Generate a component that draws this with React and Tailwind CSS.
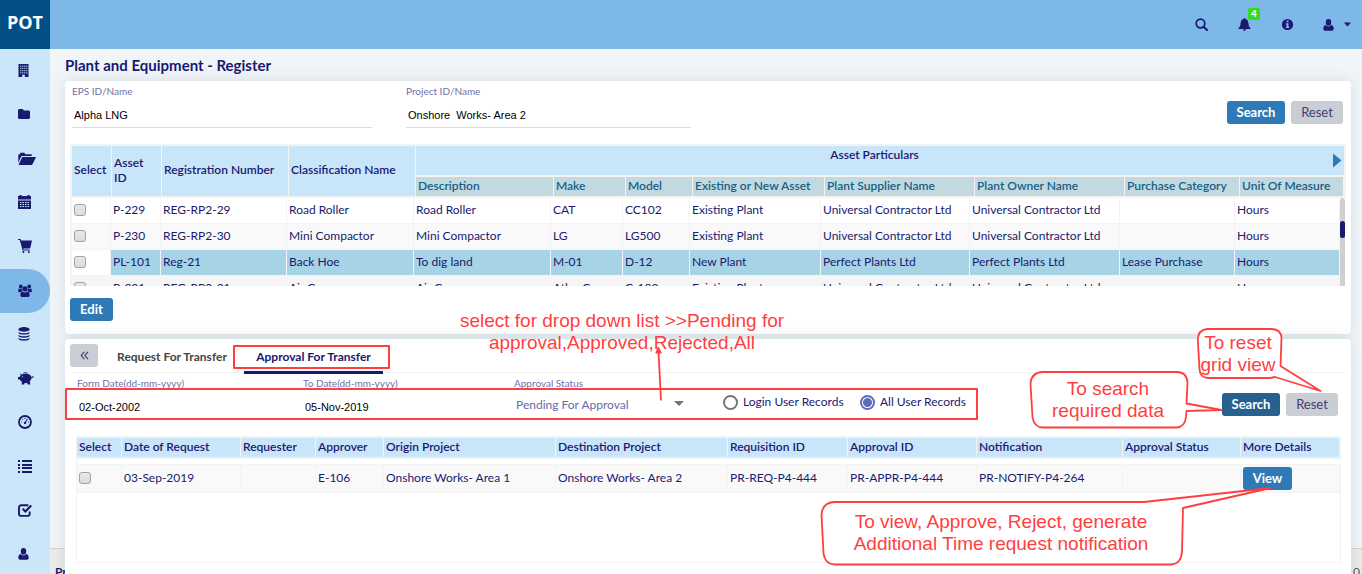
import { useState } from "react";

const assetColumns = [
  "Description",
  "Make",
  "Model",
  "Existing or New Asset",
  "Plant Supplier Name",
  "Plant Owner Name",
  "Purchase Category",
  "Unit Of Measure",
];

const assetRows = [
  ["P-229", "REG-RP2-29", "Road Roller", "Road Roller", "CAT", "CC102", "Existing Plant", "Universal Contractor Ltd", "Universal Contractor Ltd", "", "Hours"],
  ["P-230", "REG-RP2-30", "Mini Compactor", "Mini Compactor", "LG", "LG500", "Existing Plant", "Universal Contractor Ltd", "Universal Contractor Ltd", "", "Hours"],
  ["PL-101", "Reg-21", "Back Hoe", "To dig land", "M-01", "D-12", "New Plant", "Perfect Plants Ltd", "Perfect Plants Ltd", "Lease Purchase", "Hours"],
  ["P-231", "REG-RP2-31", "Air Compressor", "Air Compressor", "Atlas Copco", "C-100", "Existing Plant", "Universal Contractor Ltd", "Universal Contractor Ltd", "", "Hours"],
];

const rowTones = ["bg-white", "bg-[#f9f9f9]", "bg-[#a6d3e6]", "bg-[#f5f5f5]"];

const headWidths = [40, 50, 127, 127, 138, 72, 67, 132, 150, 150, 115, 104];
const bodyWidths = [39, 50, 126, 127, 137, 72, 67, 131, 149, 150, 115, 105];
const transferWidths = [45, 119, 75, 68, 172, 172, 120, 129, 146, 118, 99];

const transferColumns = [
  "Select",
  "Date of Request",
  "Requester",
  "Approver",
  "Origin Project",
  "Destination Project",
  "Requisition ID",
  "Approval ID",
  "Notification",
  "Approval Status",
  "More Details",
];

const transferCells = ["03-Sep-2019", "", "E-106", "Onshore Works- Area 1", "Onshore Works- Area 2", "PR-REQ-P4-444", "PR-APPR-P4-444", "PR-NOTIFY-P4-264", ""];

function Columns({ widths }) {
  return (
    <colgroup>
      {widths.map((w, i) => (
        <col key={i} style={{ width: w }} />
      ))}
    </colgroup>
  );
}

function Icon({ w, h, children }) {
  return (
    <svg width={w} height={h} viewBox={`0 0 ${w} ${h}`} fill="currentColor" aria-hidden="true">
      {children}
    </svg>
  );
}

const UserShape = () => (
  <Icon w={11} h={12}>
    <ellipse cx="5.5" cy="3.4" rx="2.7" ry="3.3" />
    <path d="M2.6 6.1C.9 6.7.3 8 .3 9.8c0 1.3.7 2 1.9 2h6.6c1.2 0 1.9-.7 1.9-2 0-1.800-.6-3.100-2.300-3.700-.8.900-1.700 1.300-2.900 1.300S3.400 7 2.600 6.100z" />
  </Icon>
);

const menu = [
  {
    name: "Enterprise",
    icon: (
      <Icon w={11} h={13}>
        <path fillRule="evenodd" d="M.5 0h10v13H6.800v-2.300H4.200V13H.5zM2.300 1.600v1.200h1V1.600zm2 0v1.200h1V1.600zm2 0v1.200h1V1.600zm2 0v1.200h1V1.600zM2.300 3.800V5h1V3.800zm2 0V5h1V3.800zm2 0V5h1V3.800zm2 0V5h1V3.800zM2.300 6v1.200h1V6zm2 0v1.200h1V6zm2 0v1.200h1V6zm2 0v1.200h1V6zM2.300 8.200v1.200h1V8.200zm2 0v1.200h1V8.200zm2 0v1.200h1V8.200zm2 0v1.200h1V8.200z" />
      </Icon>
    ),
  },
  {
    name: "Projects",
    icon: (
      <Icon w={12} h={10}>
        <path d="M0 1.500C0 .6.6 0 1.500 0h2.700c.9 0 1.400.6 1.400 1.500h4.900c.9 0 1.500.6 1.500 1.500v5.500c0 .9-.6 1.500-1.500 1.500h-9C.6 10 0 9.400 0 8.500z" />
      </Icon>
    ),
  },
  {
    name: "Library",
    icon: (
      <Icon w={18} h={13}>
        <path d="M.3 10.800V2.600h1.200L2.400.8h4l.9 1.400h6.400v1.900H4.200c-.6 0-1 .3-1.300.8z" />
        <path d="M4.700 5h12.600c.5 0 .6.4.4.8l-3.200 6.400c-.2.500-.6.8-1.100.8H1.200c-.5 0-.6-.4-.4-.8L4 5.500c.1-.3.4-.5.700-.5z" />
      </Icon>
    ),
  },
  {
    name: "Calendar",
    icon: (
      <Icon w={13} h={14}>
        <path d="M1.500 0h2v1h6V0h2v1H13v3.500H0V1h1.500z" />
        <path fillRule="evenodd" d="M0 5.500h13V14H0zm2 1.500v1h1.500V7zm2.500 0v1H6V7zM7 7v1h1.500V7zm2.500 0v1H11V7zM2 9v1h1.500V9zm2.500 0v1H6V9zM7 9v1h1.500V9zm2.500 0v1H11V9zM2 11v1h1.500v-1zm2.500 0v1H6v-1zM7 11v1h1.500v-1zm2.500 0v1H11v-1z" />
      </Icon>
    ),
  },
  {
    name: "Procurement",
    icon: (
      <Icon w={14} h={14}>
        <path d="M0 0h2.500l.7 1.600H14l-1.600 7c-.1.500-.5.800-1 .8H5.300l.3 1.100h6.200v1H4.600L1.800 1.100H0z" />
        <circle cx="5.400" cy="13" r="1" />
        <circle cx="10.800" cy="13" r="1" />
      </Icon>
    ),
  },
  {
    name: "Resources",
    active: true,
    icon: (
      <Icon w={14} h={14}>
        <circle cx="2.800" cy="2.400" r="1.900" />
        <circle cx="11.200" cy="2.400" r="1.900" />
        <circle cx="7" cy="4.800" r="2.600" />
        <path d="M.2 7.400C.1 5.400.6 4.600 1.300 4.400c.9.600 1.900.6 2.600.2-.1 1 .1 1.900.7 2.700-.9.100-1.500.4-1.900.9H1.400C.7 8.200.2 8 .2 7.400zM13.800 7.400c.1-2-.4-2.800-1.100-3-.9.600-1.900.6-2.600.2.1 1-.1 1.900-.7 2.700.9.100 1.500.4 1.900.9h1.300c.7 0 1.200-.2 1.200-.8z" />
        <path d="M4.400 7.400c-1.300.3-2 1.600-2 3.500 0 1.400.7 2.100 1.900 2.100h5.400c1.200 0 1.900-.7 1.900-2.100 0-1.900-.7-3.200-2-3.500-.7.700-1.500 1-2.600 1s-1.900-.3-2.600-1z" />
      </Icon>
    ),
  },
  {
    name: "Data",
    icon: (
      <Icon w={12} h={14}>
        <ellipse cx="6" cy="2.400" rx="5.600" ry="2.400" />
        <path d="M.4 5C1.600 6 3.600 6.300 6 6.300S10.400 6 11.600 5v.8C11.400 7 9 7.800 6 7.800S.6 7 .4 5.800zM.4 8c1.200 1 3.200 1.300 5.600 1.300S10.400 9 11.600 8v.8c-.2 1.200-2.600 2-5.600 2S.6 10 .4 8.800zM.4 11c1.200 1 3.200 1.300 5.600 1.300s4.400-.3 5.600-1.300v.8c-.2 1.200-2.600 2-5.600 2s-5.400-.8-5.600-2z" />
      </Icon>
    ),
  },
  {
    name: "Budget",
    icon: (
      <Icon w={16} h={13}>
        <path d="M5 .9C6.200.2 8.500 0 9.800.9l-.5.800c-1.300-.5-2.500-.4-3.800 0z" />
        <path fillRule="evenodd" d="M2 1.500l2.100.9c1.100-.5 2.300-.7 3.700-.7 2.900 0 5.200 1.200 5.700 3.300.8.100 1.200-.3 1.100-1.100l.9-.1c.3 1.500-.5 2.400-2 2.300-.1 1.200-.7 2.300-1.700 3.100l.5 3.200H9.700l-.4-1.500H6.700l-.5 1.500H3.700l.1-2.700c-.9-.5-1.600-1.200-2-2.100H0V4.900h1.500c.3-.6.700-1.100 1.200-1.500zM3.900 4.300v.9h.9v-.9z" />
      </Icon>
    ),
  },
  {
    name: "Dashboard",
    icon: (
      <Icon w={14} h={14}>
        <circle cx="7" cy="7" r="6" fill="none" stroke="currentColor" strokeWidth="1.800" />
        <circle cx="7" cy="8" r="1.200" />
        <path d="M6.600 7.600L9 3.700l.8.500-2.200 4z" />
        <circle cx="3.700" cy="7" r=".6" />
        <circle cx="4.700" cy="4.500" r=".6" />
        <circle cx="7" cy="3.400" r=".6" />
        <circle cx="10.400" cy="7" r=".6" />
      </Icon>
    ),
  },
  {
    name: "Work list",
    icon: (
      <Icon w={14} h={13}>
        <path d="M0 0h2v2H0zM4 0h10v2H4zM0 4h2v2H0zM4 4h10v2H4zM0 7h2v2H0zM4 7h10v2H4zM0 11h2v2H0zM4 11h10v2H4z" />
      </Icon>
    ),
  },
  {
    name: "Approvals",
    icon: (
      <Icon w={14} h={13}>
        <path d="M10.300 1.300H3.200C1.900 1.300 1 2.200 1 3.500v6.200c0 1.300.9 2.200 2.200 2.200h6.300c1.300 0 2.200-.9 2.200-2.200V7.600" fill="none" stroke="currentColor" strokeWidth="1.900" />
        <path d="M3.900 5.400l1.500-1.300 1.900 1.900L12.400.8 14 2.300 7.400 8.900z" />
      </Icon>
    ),
  },
  { name: "Users", icon: <UserShape /> },
];

const buttonBase = "h-[23px] rounded-[3px] text-[13px] leading-none";

function Tick({ label }) {
  return (
    <input
      type="checkbox"
      aria-label={label}
      className="block size-3 appearance-none rounded-[3px] border border-[#a0a0a0] bg-linear-to-b from-[#e8e8e8] to-[#dcdcdc] checked:bg-[#2f7ab6]"
    />
  );
}

function AssetTable() {
  const head = "border-r border-b-2 border-[#f3f3f3] bg-[#c9e5f9] pt-0 pr-2 pb-[3px] pl-0.5 text-left font-semibold leading-[15px]";
  return (
    <div className="mt-4">
      <div className="border-2 border-b-0 border-[#f3f3f3]">
        <table className="w-full table-fixed border-separate border-spacing-0">
          <Columns widths={headWidths} />
          <thead>
            <tr className="h-[31px]">
              {["Select", "Asset ID", "Registration Number", "Classification Name"].map((t) => (
                <th key={t} rowSpan={2} className={head}>{t}</th>
              ))}
              <th colSpan={8} className="border-b-2 border-[#f3f3f3] bg-[#c9e5f9] p-0 align-top font-semibold">
                <div className="flex h-[29px]">
                  <span className="flex-1 text-center leading-[18px]">Asset Particulars</span>
                  <button aria-label="Next columns" className="mr-0.5 text-[#2f7ab6]">
                    <Icon w={9} h={15}>
                      <path d="M0 .5v14l8.500-7z" />
                    </Icon>
                  </button>
                </div>
              </th>
            </tr>
            <tr className="h-[21px]">
              {assetColumns.map((t) => (
                <th key={t} className="border-r border-b-2 border-[#f3f3f3] bg-[#c2d9df] px-0.5 pt-0 pb-0.5 text-left font-semibold leading-[17px] whitespace-nowrap text-[#14608a]">{t}</th>
              ))}
            </tr>
          </thead>
        </table>
      </div>
      <div className="flex h-[88px] overflow-hidden border-l-2 border-[#f3f3f3] pr-px">
        <table className="h-fit min-w-0 flex-1 table-fixed border-separate border-spacing-0">
          <Columns widths={bodyWidths} />
          <tbody>
            {assetRows.map((row, r) => (
              <tr key={row[0]} className="h-[26px]">
                <td className={`border-r border-b border-[#f3f3f3] px-0.5 pt-0 pb-px ${r === 2 ? "bg-white" : rowTones[r]}`}>
                  <Tick label={`Select ${row[0]}`} />
                </td>
                {row.map((cell, c) => (
                  <td key={c} className={`border-r border-b border-[#f3f3f3] px-0.5 pt-0 pb-0.5 leading-[23px] whitespace-nowrap ${rowTones[r]}`}>{cell}</td>
                ))}
              </tr>
            ))}
          </tbody>
        </table>
        <div className="w-[5px] shrink-0 rounded-t-sm bg-[#cfcfcf] pt-[23px]">
          <div className="h-[17px] rounded-sm bg-[#191970]" />
        </div>
      </div>
    </div>
  );
}

function TransferTable() {
  const cell = "border-r border-y border-[#f3f3f3] bg-[#f9f9f9] px-0.5 whitespace-nowrap";
  return (
    <div className="mt-[13px] mr-[5px] ml-1.5 h-[127px] border border-t-2 border-[#f3f3f3]">
      <table className="w-full table-fixed border-separate border-spacing-0">
        <Columns widths={transferWidths} />
        <thead>
          <tr className="h-[21px]">
            {transferColumns.map((t) => (
              <th key={t} className="border-r border-b-2 border-[#f3f3f3] bg-[#c9e5f9] px-0.5 pt-0 pb-0.5 text-left font-semibold leading-[17px] whitespace-nowrap">{t}</th>
            ))}
          </tr>
        </thead>
        <tbody>
          <tr className="h-[5px]">
            <td colSpan={11} className="p-0" />
          </tr>
          <tr className="h-[29px]">
            <td className={`${cell} pt-0 pb-0.5`}>
              <Tick label="Select 03-Sep-2019" />
            </td>
            {transferCells.map((t, i) => (
              <td key={i} className={`${cell} pt-0 pb-0.5`}>{t}</td>
            ))}
            <td className={`${cell} py-0`}>
              <button className={`${buttonBase} block w-[49px] bg-[#2f7ab6] font-bold text-white`}>View</button>
            </td>
          </tr>
        </tbody>
      </table>
    </div>
  );
}

function Annotations() {
  const note = "absolute -translate-x-1/2 text-center text-[19px] leading-[22px] whitespace-nowrap text-[#ff3f3f]";
  return (
    <div className="pointer-events-none absolute inset-0 z-20 font-['Liberation_Sans',sans-serif]">
      <svg className="absolute top-0 left-0" width="1362" height="574" viewBox="0 0 1362 574" fill="none" stroke="#ff3f3f" strokeWidth="1.800" strokeLinejoin="round" aria-hidden="true">
        <rect x="234" y="346" width="155" height="22" strokeWidth="2" />
        <rect x="66" y="389" width="911" height="30" strokeWidth="2" />
        <path d="M661 400.500L658.500 352" />
        <path d="M658.300 347L655.800 353h5.500z" fill="#ff3f3f" strokeWidth="1" />
        <path fill="#fff" d="M1042 372H1177Q1187 372 1187.500 383L1186.500 403.500L1221.500 410L1186.500 411L1186 417Q1185 427.500 1176 427.500H1044Q1034 428 1032.500 417L1030.500 384Q1031 373 1042 372z" />
        <path fill="#fff" d="M1207 329H1272Q1281 329.500 1281.500 338L1280.500 366L1320.500 391L1275 377L1270 378H1208Q1200 377.500 1199.500 369L1197.800 340Q1198 330 1207 329z" />
        <path fill="#fff" d="M834 502H1144L1270.500 488L1183 508L1182 552Q1181 564 1171 564.500H835Q825 564.500 823.500 553L821.500 515Q822 503 834 502z" />
      </svg>
      <p className={`${note} top-[310px] left-[622px]`}>
        select for drop down list &gt;&gt;Pending for
        <br />
        approval,Approved,Rejected,All
      </p>
      <p className={`${note} top-[378px] left-[1108px]`}>
        To search
        <br />
        required data
      </p>
      <p className={`${note} top-[332px] left-[1238px]`}>
        To reset
        <br />
        grid view
      </p>
      <p className={`${note} top-[511px] left-[1001px]`}>
        To view, Approve, Reject, generate
        <br />
        Additional Time request notification
      </p>
    </div>
  );
}

export default function App() {
  const [scope, setScope] = useState("all");
  const panel = "relative z-10 mr-[11px] ml-[15px] bg-white px-[5px] shadow-[0_0_16px_rgba(60,90,100,0.14)]";
  const fieldLabel = "block text-[10px] leading-4 text-[#6f6fa8]";
  const fieldInput = "w-full bg-transparent px-0.5 font-['Liberation_Sans',sans-serif] text-[11px] text-black outline-none";
  const primary = `${buttonBase} w-[58px] font-bold text-white`;
  const neutral = `${buttonBase} w-[52px] bg-[#cacdd3] text-[#3f3f75]`;
  const radio = "size-[15px] appearance-none rounded-full border-2 border-[#757575] checked:border-[#5c6bc0] checked:bg-[radial-gradient(circle,#5c6bc0_0_4px,#fff_5px)]";

  return (
    <div className="relative flex h-screen flex-col overflow-hidden bg-[#f0f5f8] font-['Lato',sans-serif] text-[12px] text-[#191970]">
      <header className="flex h-[49px] shrink-0 bg-[#7db8e8]">
        <a href="#home" className="flex w-[50px] items-center justify-center bg-[#024f87] pb-1 font-['Open_Sans',sans-serif] text-[18px] font-bold text-white">POT</a>
        <div className="ml-auto flex items-center pr-[11px]">
          <button aria-label="Search" className="mr-[30px]">
            <Icon w={13} h={13}>
              <circle cx="5.500" cy="5.500" r="4.300" fill="none" stroke="currentColor" strokeWidth="1.700" />
              <path d="M8.700 8.700l3.300 3.300" stroke="currentColor" strokeWidth="2" strokeLinecap="round" />
            </Icon>
          </button>
          <button aria-label="Notifications" className="relative mr-[30px]">
            <Icon w={13} h={13}>
              <path d="M6.500 0c.6 0 .9.400.9.900 2 .5 2.900 2 3 4.200.1 2.500.7 4 2.200 5.200v.6H.4v-.6C1.900 9.100 2.500 7.600 2.600 5.100c.1-2.200 1-3.700 3-4.200 0-.5.300-.9.900-.9zM5 11.300h3c0 .9-.6 1.500-1.500 1.500S5 12.200 5 11.300z" />
            </Icon>
            <span className="absolute -top-2.5 left-[10px] h-3 w-3 rounded-xs bg-[#35dc1c] text-center text-[10px] leading-[11px] font-bold text-white">4</span>
          </button>
          <button aria-label="Information" className="mr-[29px]">
            <Icon w={13} h={13}>
              <path fillRule="evenodd" d="M6.500.9a5.600 5.600 0 100 11.200 5.600 5.600 0 000-11.200zM5.600 2.500h1.900v1.700H5.600zM4.800 5.300h2.700v3.500h.8v1.300H4.800V8.800h.8V6.600h-.8z" />
            </Icon>
          </button>
          <button aria-label="Account" className="flex items-center gap-2.5">
            <UserShape />
            <Icon w={7} h={5}>
              <path d="M0 .5h7L3.500 4.500z" />
            </Icon>
          </button>
        </div>
      </header>

      <div className="flex min-h-0 flex-1">
        <nav className="w-[50px] shrink-0 bg-[#cbe6f9]">
          {menu.map((m) => (
            <a
              key={m.name}
              href={`#${m.name.toLowerCase().replace(" ", "-")}`}
              aria-label={m.name}
              className={`flex h-11 items-center pl-[18px] ${m.active ? "rounded-r-[22px] bg-[#7db8e8]" : "pb-0.5"}`}
            >
              {m.icon}
            </a>
          ))}
        </nav>

        <main className="relative min-w-0 flex-1">
          <h1 className="h-8 pl-[15px] text-[15px] leading-8 font-bold">Plant and Equipment - Register</h1>

          <section className={`${panel} rounded-[4px] pt-0.5 pb-[13px]`}>
            <div className="flex items-start pr-[3px] pl-0.5">
              <div className="w-[300px]">
                <label htmlFor="eps" className={fieldLabel}>EPS ID/Name</label>
                <input id="eps" defaultValue="Alpha LNG" className={`${fieldInput} block h-[29px] border-b border-[#dcdcdc] pt-1`} />
              </div>
              <div className="ml-[34px] w-[285px]">
                <label htmlFor="project" className={fieldLabel}>Project ID/Name</label>
                <input id="project" defaultValue="Onshore  Works- Area 2" className={`${fieldInput} block h-[29px] border-b border-[#dcdcdc] pt-1`} />
              </div>
              <div className="mt-[18px] ml-auto flex gap-1.5">
                <button className={`${primary} bg-[#2f7ab6]`}>Search</button>
                <button className={neutral}>Reset</button>
              </div>
            </div>
            <AssetTable />
            <button className={`${buttonBase} mt-3 block w-[43px] bg-[#2f7ab6] font-bold text-white`}>Edit</button>
          </section>

          <section className={`${panel} mt-[5px] h-[300px] rounded-t-[4px] pt-[5px]`}>
            <div className="flex h-[29px] border-b border-[#f0f0f0]">
              <button aria-label="Collapse" className={`${buttonBase} mr-1.5 flex w-7 items-center justify-center bg-[#cacdd3]`}>
                <svg width="9" height="9" viewBox="0 0 9 9" fill="none" stroke="#3a3a72" strokeWidth="1.100" aria-hidden="true">
                  <path d="M4.300.8L1.200 4.500l3.100 3.700M8 .8L4.900 4.500 8 8.200" />
                </svg>
              </button>
              <button className="h-[30px] w-[136px] pb-1 text-center font-bold text-[#444]">Request For Transfer</button>
              <button className="ml-1 h-[30px] w-[139px] border-b-[3px] border-[#191970] pb-px text-center font-bold">Approval For Transfer</button>
            </div>

            <div className="flex items-start pt-0.5 pr-2 pl-[7px]">
              <div className="w-[226px]">
                <label htmlFor="from" className={fieldLabel}>Form Date(dd-mm-yyyy)</label>
                <input id="from" defaultValue="02-Oct-2002" className={`${fieldInput} block h-8`} />
              </div>
              <div className="w-[211px]">
                <label htmlFor="to" className={fieldLabel}>To Date(dd-mm-yyyy)</label>
                <input id="to" defaultValue="05-Nov-2019" className={`${fieldInput} block h-8`} />
              </div>
              <div className="relative w-[170px]">
                <label htmlFor="status" className={fieldLabel}>Approval Status</label>
                <select id="status" className="block h-7 w-full appearance-none bg-transparent px-0.5 text-[12px] text-[#6a6aa6] outline-none">
                  <option>Pending For Approval</option>
                  <option>Approved</option>
                  <option>Rejected</option>
                  <option>All</option>
                </select>
                <svg className="pointer-events-none absolute top-[26px] right-0" width="10" height="5" viewBox="0 0 10 5" fill="#757575" aria-hidden="true">
                  <path d="M0 0h10L5 5z" />
                </svg>
              </div>
              <div className="mt-[18px] ml-[39px] flex">
                <label className="flex w-[137px] items-center gap-[5px] whitespace-nowrap">
                  <input type="radio" name="scope" checked={scope === "login"} onChange={() => setScope("login")} className={radio} />
                  Login User Records
                </label>
                <label className="flex items-center gap-[5px] whitespace-nowrap">
                  <input type="radio" name="scope" checked={scope === "all"} onChange={() => setScope("all")} className={radio} />
                  All User Records
                </label>
              </div>
              <div className="mt-[18px] ml-auto flex gap-1.5">
                <button className={`${primary} bg-[#28608f]`}>Search</button>
                <button className={neutral}>Reset</button>
              </div>
            </div>
            <TransferTable />
          </section>

          <footer className="absolute inset-x-0 -bottom-5 flex h-[46px] items-center justify-between border-t border-[#cfd2d6] bg-[#ebebeb] pr-0.5 pl-[5px]">
            <span className="font-bold">Pr</span>
            <span className="text-[#555]">0</span>
          </footer>
        </main>
      </div>

      <Annotations />
    </div>
  );
}
